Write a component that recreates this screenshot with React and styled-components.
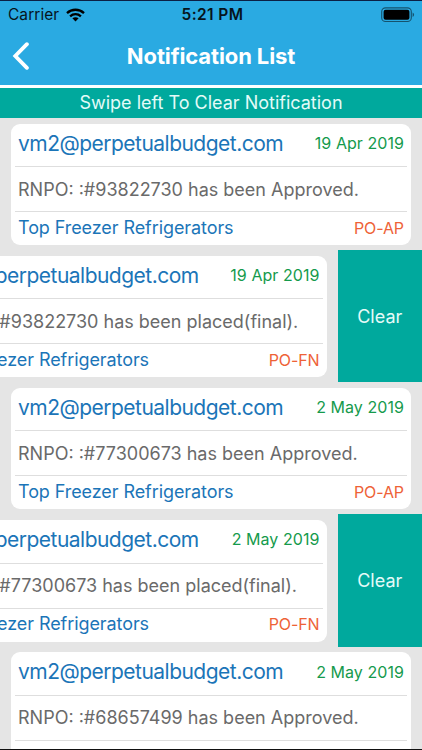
import React from 'react';
import styled, { createGlobalStyle } from 'styled-components';

const GlobalStyle = createGlobalStyle`
    * {
        box-sizing: border-box;
    }

    body {
        margin: 0;
        overflow: hidden;
        font-family: Inter, 'Liberation Sans', sans-serif;
    }
`

const Screen = styled.div`
    display: flex;
    flex-direction: column;
    width: 422px;
    height: 750px;
    overflow: hidden;
    background: #e5e5e5;
    border-top: 1px solid #0b2045;
    border-bottom: 1px solid #111;
`

// Header styles
const Header = styled.header`
    flex: none;
    height: 87px;
    background: #2aaae2;
    border-bottom: 3px solid #fff;
`

const StatusBar = styled.div`
    display: grid;
    grid-template-columns: 1fr auto 1fr;
    align-items: center;
    height: 27px;
    padding: 0 7px 0 8px;
    color: #06141c;
`

const Carrier = styled.div`
    display: flex;
    align-items: center;
    gap: 7px;
    font-size: 15.5px;
    letter-spacing: 0.05px;
`

const Clock = styled.div`
    padding-left: 2px;
    font-size: 15.5px;
    font-weight: 600;
    letter-spacing: 0.4px;
`

const Battery = styled.svg`
    justify-self: end;
`

const TitleBar = styled.div`
    display: grid;
    grid-template-columns: 40px 1fr 40px;
    align-items: center;
    height: 56px;
`

const BackButton = styled.button`
    display: flex;
    padding: 0 0 0 11px;
    border: 0;
    background: none;
`

const Title = styled.h1`
    margin: 0;
    color: #fff;
    font-size: 22px;
    font-weight: 700;
    text-align: center;
    letter-spacing: -0.12px;
`

const Banner = styled.div`
    flex: none;
    height: 30px;
    line-height: 30px;
    background: #00a99d;
    color: #e4fbf8;
    font-size: 18px;
    text-align: center;
`

// List styles
const List = styled.div`
    flex: 1;
    min-height: 0;
    overflow: hidden;
`

const Row = styled.div`
    display: flex;
    justify-content: ${p => p.$open ? 'flex-end' : 'flex-start'};
    height: 132.15px;
    overflow: hidden;
`

const Card = styled.div`
    flex: none;
    display: flex;
    flex-direction: column;
    width: 400px;
    height: 121.6px;
    margin: 5.6px 11px 0;
    padding: 0 4px;
    border-radius: 9px;
    background: #fff;
`

const Line = styled.div`
    display: flex;
    align-items: center;
    justify-content: space-between;
    height: ${p => p.$height}px;
    padding: 0 3px ${p => p.$lift || 0}px;
    white-space: nowrap;

    & + & {
        border-top: 1px solid #dedede;
    }
`

const Email = styled.span`
    color: #1b75b8;
    font-size: 21px;
    letter-spacing: -0.52px;
`

const DateText = styled.span`
    color: #159a4c;
    font-size: 16px;
    letter-spacing: 0.06px;
`

const Message = styled.span`
    color: #6a6a6a;
    font-size: 18px;
`

const Product = styled.span`
    color: #1b75b8;
    font-size: 18px;
    letter-spacing: -0.08px;
`

const Status = styled.span`
    color: #ee6237;
    font-size: 16px;
    letter-spacing: -0.1px;
`

const ClearButton = styled.button`
    flex: none;
    width: 84.5px;
    padding: 0;
    border: 0;
    background: #00a99d;
    color: #e4fbf8;
    font-family: inherit;
    font-size: 18px;
`

const notifications = [
    { id: 1, date: '19 Apr 2019', message: 'RNPO: :#93822730 has been Approved.', status: 'PO-AP', open: false },
    { id: 2, date: '19 Apr 2019', message: 'RNPO: :#93822730 has been placed(final).', status: 'PO-FN', open: true },
    { id: 3, date: '2 May 2019', message: 'RNPO: :#77300673 has been Approved.', status: 'PO-AP', open: false },
    { id: 4, date: '2 May 2019', message: 'RNPO: :#77300673 has been placed(final).', status: 'PO-FN', open: true },
    { id: 5, date: '2 May 2019', message: 'RNPO: :#68657499 has been Approved.', status: 'PO-AP', open: false },
]

const Notification = ({ item }) => (
    <Row $open={item.open}>
        <Card>
            <Line $height={42.5} $lift={3.6}>
                <Email>vm2@perpetualbudget.com</Email>
                <DateText>{item.date}</DateText>
            </Line>
            <Line $height={45}>
                <Message>{item.message}</Message>
            </Line>
            <Line $height={34} $lift={2.2}>
                <Product>Top Freezer Refrigerators</Product>
                <Status>{item.status}</Status>
            </Line>
        </Card>
        {item.open && <ClearButton>Clear</ClearButton>}
    </Row>
)

export default function App() {
    return (
        <Screen>
            <GlobalStyle />
            <Header>
                <StatusBar>
                    <Carrier>
                        Carrier
                        <svg width="19" height="14" viewBox="0 0 19 14" fill="none" stroke="#000" strokeWidth="2.3">
                            <path d="M1 5.1C5.7 0.6 13.3 0.6 18 5.1" />
                            <path d="M4.1 8.3C7.2 5.4 11.8 5.4 14.9 8.3" />
                            <path d="M9.5 13.4L6.4 10.3C8.1 8.8 10.9 8.8 12.6 10.3Z" fill="#000" stroke="none" />
                        </svg>
                    </Carrier>
                    <Clock>5:21 PM</Clock>
                    <Battery width="34" height="16" viewBox="0 0 34 16">
                        <rect x="0.7" y="0.9" width="29.6" height="13.6" rx="3.8" fill="none" stroke="#15526d" strokeWidth="1.1" />
                        <rect x="2.6" y="2.7" width="25.8" height="10" rx="2" fill="#000" />
                        <path d="M31.6 5.6C33.6 6.4 33.6 9.2 31.6 10Z" fill="#15526d" />
                    </Battery>
                </StatusBar>
                <TitleBar>
                    <BackButton>
                        <svg width="18" height="28" viewBox="0 0 18 28" fill="none" stroke="#fff" strokeWidth="3.8" strokeLinecap="round" strokeLinejoin="miter">
                            <path d="M15.9 2.2L4.3 14L15.9 25.8" />
                        </svg>
                    </BackButton>
                    <Title>Notification List</Title>
                </TitleBar>
            </Header>
            <Banner>Swipe left To Clear Notification</Banner>
            <List>
                {notifications.map(item => <Notification key={item.id} item={item} />)}
            </List>
        </Screen>
    )
}
